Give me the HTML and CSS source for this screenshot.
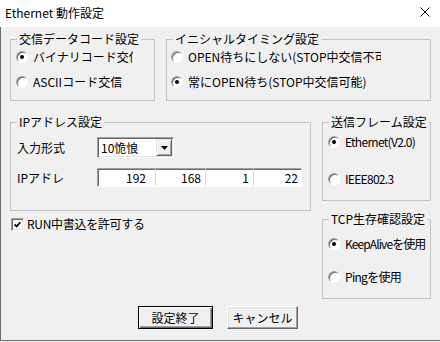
FILE: index.html
```html
<!DOCTYPE html>
<html lang="ja">
<head>
<meta charset="utf-8">
<title>Ethernet 動作設定</title>
<link rel="stylesheet" href="styles.css">
</head>
<body>
<div class="titlebar">
  <span class="title">Ethernet 動作設定</span>
  <svg class="close" width="10" height="10" viewBox="0 0 10 10"><path d="M0.5 0.5 L9.5 9.5 M9.5 0.5 L0.5 9.5" stroke="#000" stroke-width="1" fill="none"/></svg>
</div>
<div class="dialog">
  <div class="row1">
    <div class="group g-code">
      <span class="group-title">交信データコード設定</span>
      <div class="opt"><span class="radio on"></span><span class="opt-text clip-bin">バイナリコード交信</span></div>
      <div class="opt"><span class="radio"></span><span class="opt-text">ASCIIコード交信</span></div>
    </div>
    <div class="group g-timing">
      <span class="group-title">イニシャルタイミング設定</span>
      <div class="opt"><span class="radio"></span><span class="opt-text clip-open">OPEN待ちにしない(STOP中交信不可能)</span></div>
      <div class="opt"><span class="radio on"></span><span class="opt-text">常にOPEN待ち(STOP中交信可能)</span></div>
    </div>
  </div>
  <div class="row2">
    <div class="col-left">
      <div class="group g-ip">
        <span class="group-title">IPアドレス設定</span>
        <div class="ip-grid">
          <span class="lbl">入力形式</span>
          <div class="combo">
            <span class="combo-text">10恑悢</span>
            <span class="combo-btn"><svg width="7" height="4" viewBox="0 0 7 4"><path d="M0 0 H7 L3.5 4 Z" fill="#000"/></svg></span>
          </div>
          <span class="lbl">IPアドレ</span>
          <div class="ipfield">
            <span class="oct o1">192</span>
            <span class="oct o2">168</span>
            <span class="oct o3">1</span>
            <span class="oct o4">22</span>
          </div>
        </div>
      </div>
      <div class="check-row">
        <span class="checkbox"><svg width="7" height="7" viewBox="0 0 7 7"><path d="M0.6 3.4 L2.6 5.4 L6.4 1.2" stroke="#000" stroke-width="1.7" fill="none"/></svg></span>
        <span class="check-text">RUN中書込を許可する</span>
      </div>
    </div>
    <div class="col-right">
      <div class="group g-frame">
        <span class="group-title">送信フレーム設定</span>
        <div class="opt"><span class="radio on"></span><span class="opt-text tight">Ethernet(V2.0)</span></div>
        <div class="opt"><span class="radio"></span><span class="opt-text tight">IEEE802.3</span></div>
      </div>
      <div class="group g-tcp">
        <span class="group-title">TCP生存確認設定</span>
        <div class="opt"><span class="radio on"></span><span class="opt-text tighter">KeepAliveを使用</span></div>
        <div class="opt"><span class="radio"></span><span class="opt-text tight">Pingを使用</span></div>
      </div>
    </div>
  </div>
  <div class="buttons">
    <button class="btn btn-default">設定終了</button>
    <button class="btn btn-cancel">キャンセル</button>
  </div>
</div>
</body>
</html>
```
FILE: styles.css
```css
* { box-sizing: border-box; }
html, body { margin: 0; padding: 0; }
body {
  width: 440px;
  height: 342px;
  overflow: hidden;
  background: #f0f0f0;
  color: #000;
  font-family: "Noto Sans CJK JP", "Noto Sans", sans-serif;
  font-size: 12px;
  line-height: 16px;
}
.titlebar {
  height: 27px;
  background: #fff;
  display: flex;
  align-items: center;
  justify-content: space-between;
  padding: 0 10px 0 5px;
}
.title { margin-top: -2px; }
.close { display: block; margin-top: -3px; }

.dialog {
  height: 314px;
  border-left: 1px solid #6d6d6d;
  border-bottom: 1px solid #6d6d6d;
  padding: 12px 0 0 9px;
}
.row1 { display: flex; gap: 11px; }
.group {
  position: relative;
  border: 1px solid #c4c4c4;
  display: flex;
  flex-direction: column;
}
.group-title {
  position: absolute;
  top: -9px;
  left: 6px;
  padding: 0 2px;
  background: #f0f0f0;
  white-space: nowrap;
}
.g-code { width: 145px; height: 62px; padding: 9px 0 0 5px; gap: 9px; }
.g-timing { width: 265px; height: 62px; padding: 9px 0 0 4px; gap: 9px; }

.opt { display: flex; align-items: center; height: 16px; white-space: nowrap; }
.opt-text { white-space: nowrap; }
.tight { letter-spacing: -0.7px; }
.tighter { letter-spacing: -0.9px; }
.clip-bin { width: 100px; overflow: hidden; }
.clip-open { width: 193px; overflow: hidden; }
.check-text { letter-spacing: -0.3px; }

.radio {
  position: relative;
  flex: none;
  width: 12px;
  height: 12px;
  margin-right: 5px;
  border-radius: 50%;
  background: #fff;
  border: 1px solid;
  border-color: #a0a0a0 #ffffff #ffffff #a0a0a0;
  box-shadow: inset 1px 1px 0 #696969;
}
.radio.on::after {
  content: "";
  position: absolute;
  left: 3px;
  top: 3px;
  width: 4px;
  height: 4px;
  border-radius: 50%;
  background: #000;
}

.row2 { display: flex; gap: 11px; margin-top: 21px; }
.col-left { width: 301px; }
.g-ip { height: 89px; padding: 14px 0 0 6px; }
.ip-grid {
  display: grid;
  grid-template-columns: 80px auto;
  row-gap: 10px;
  align-items: center;
  justify-items: start;
}
.combo {
  width: 77px;
  height: 21px;
  display: flex;
  background: #fff;
  border: 1px solid;
  border-color: #a0a0a0 #ffffff #ffffff #a0a0a0;
  box-shadow: inset 1px 1px 0 #696969, inset -1px -1px 0 #e3e3e3;
}
.combo-text { flex: 1; padding-left: 3px; line-height: 19px; }
.combo-btn {
  width: 16px;
  height: 17px;
  margin: 1px 1px 1px 0;
  display: flex;
  align-items: center;
  justify-content: center;
  background: #f0f0f0;
  border: 1px solid;
  border-color: #e3e3e3 #696969 #696969 #e3e3e3;
  box-shadow: inset 1px 1px 0 #fff, inset -1px -1px 0 #a0a0a0;
}
.combo-btn svg { display: block; }
.ipfield {
  width: 205px;
  height: 19px;
  display: flex;
  background: #fff;
  border: 1px solid;
  border-color: #a0a0a0 #ffffff #ffffff #a0a0a0;
  box-shadow: inset 1px 1px 0 #696969;
}
.oct { text-align: right; line-height: 17px; padding-right: 4px; }
.o1 { width: 57px; padding-right: 9px; }
.o2 { width: 50px; border-left: 1px solid #d9d9d9; }
.o3 { width: 48px; border-left: 1px solid #d9d9d9; padding-right: 4px; }
.o4 { width: 48px; border-left: 1px solid #d9d9d9; padding-right: 3px; }

.check-row {
  display: flex;
  align-items: center;
  height: 16px;
  margin: 5px 0 0 1px;
  white-space: nowrap;
}
.checkbox {
  width: 13px;
  height: 13px;
  margin-right: 3px;
  display: flex;
  align-items: center;
  justify-content: center;
  background: #fff;
  border: 1px solid;
  border-color: #a0a0a0 #ffffff #ffffff #a0a0a0;
  box-shadow: inset 1px 1px 0 #696969, inset -1px -1px 0 #e3e3e3;
}
.checkbox svg { display: block; }

.col-right { width: 109px; display: flex; flex-direction: column; gap: 18px; }
.g-frame { height: 79px; padding: 11px 0 0 5px; gap: 21px; }
.g-tcp { height: 80px; padding: 16px 0 0 5px; gap: 17px; }

.buttons { display: flex; gap: 14px; margin: 7px 0 0 128px; }
.btn {
  height: 23px;
  padding: 0;
  font-family: inherit;
  font-size: 12px;
  line-height: 16px;
  color: #000;
  background: #f0f0f0;
  border: 1px solid;
  border-color: #ffffff #696969 #696969 #ffffff;
  box-shadow: inset -1px -1px 0 #a0a0a0, inset 1px 1px 0 #e3e3e3;
}
.btn-default {
  width: 75px;
  border-color: #000;
  box-shadow: inset 1px 1px 0 #fff, inset -1px -1px 0 #696969, inset -2px -2px 0 #a0a0a0;
}
.btn-cancel { width: 71px; }
```
